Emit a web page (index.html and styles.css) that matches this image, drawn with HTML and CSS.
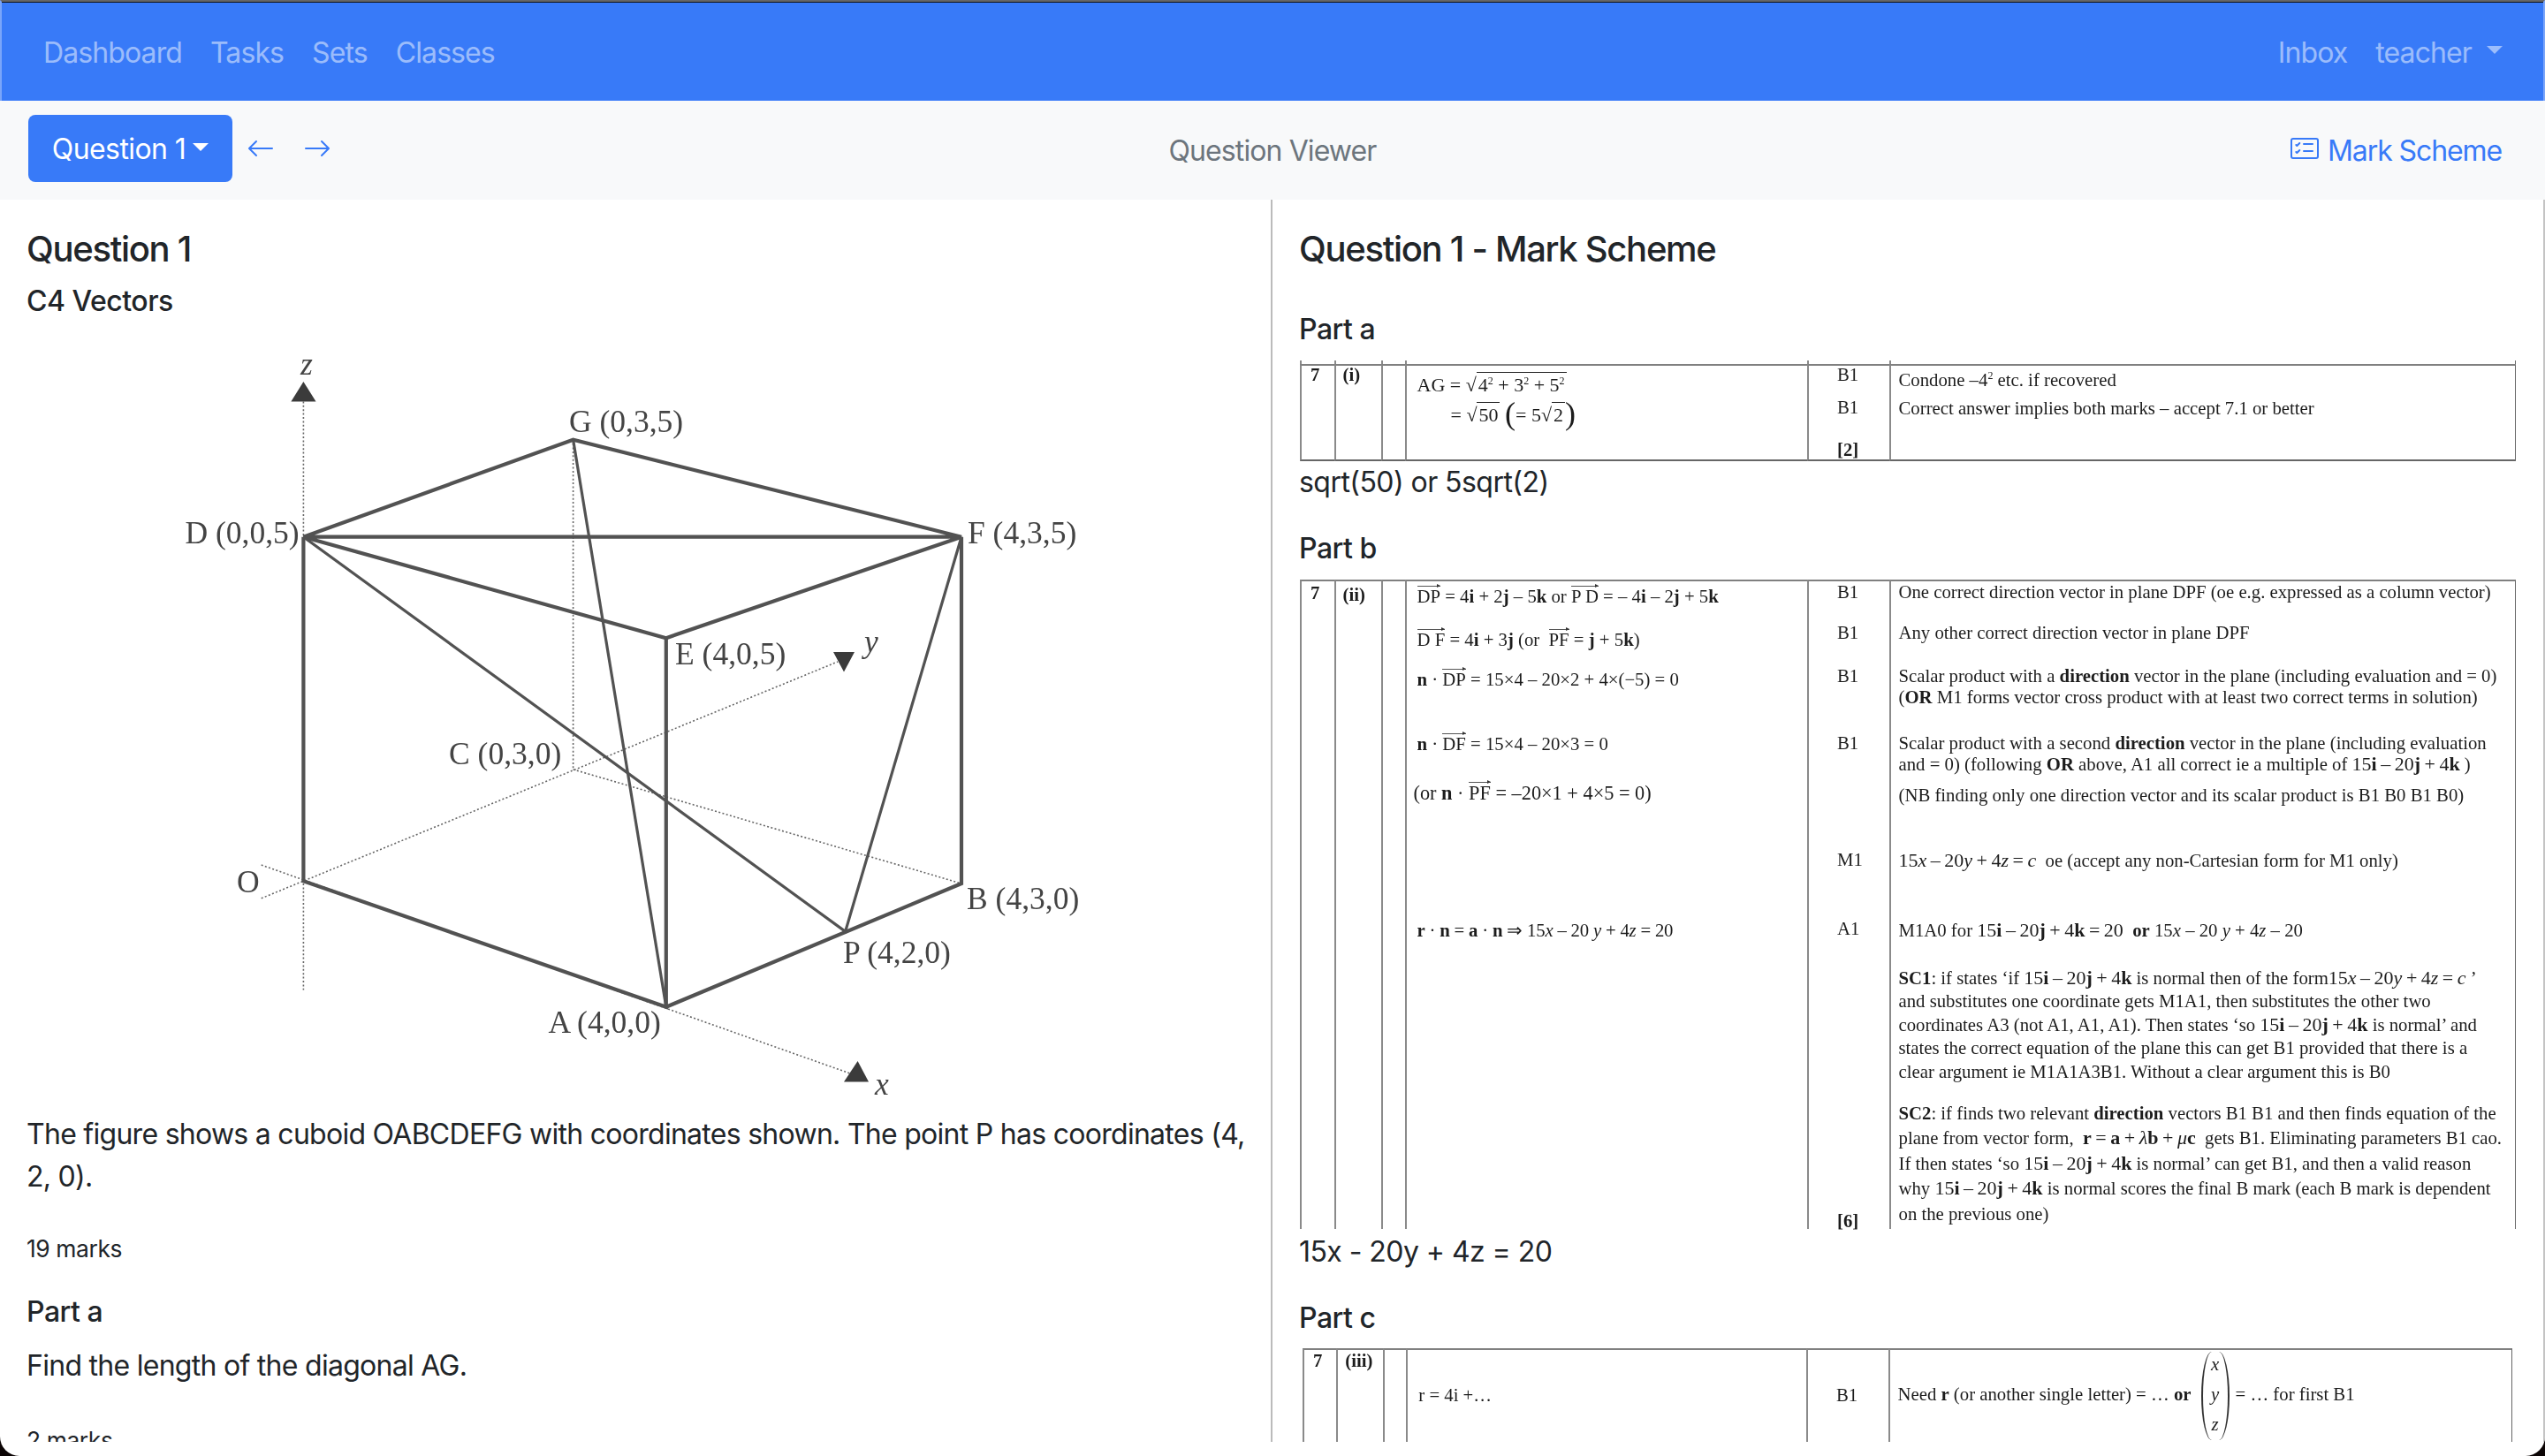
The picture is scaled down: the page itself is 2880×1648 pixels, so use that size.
FILE: index.html
```html
<!DOCTYPE html>
<html lang="en">
<head>
<meta charset="utf-8">
<title>Question Viewer</title>
<link rel="stylesheet" href="styles.css">
</head>
<body>
<div class="window">
  <nav class="navbar">
    <div class="nav-group">
      <a class="nav-link">Dashboard</a>
      <a class="nav-link">Tasks</a>
      <a class="nav-link">Sets</a>
      <a class="nav-link">Classes</a>
    </div>
    <div class="nav-group">
      <a class="nav-link">Inbox</a>
      <a class="nav-link nav-user">teacher<span class="caret caret-nav"></span></a>
    </div>
  </nav>

  <header class="toolbar">
    <div class="tool-left">
      <button class="btn-question">Question 1<span class="caret caret-btn"></span></button>
      <svg class="arrow-icon" viewBox="0 0 16 16" fill="currentColor"><path fill-rule="evenodd" d="M15 8a.5.5 0 0 0-.5-.5H2.707l3.147-3.146a.5.5 0 1 0-.708-.708l-4 4a.5.5 0 0 0 0 .708l4 4a.5.5 0 0 0 .708-.708L2.707 8.5H14.5A.5.5 0 0 0 15 8z"/></svg>
      <svg class="arrow-icon" viewBox="0 0 16 16" fill="currentColor"><path fill-rule="evenodd" d="M1 8a.5.5 0 0 1 .5-.5h11.793l-3.147-3.146a.5.5 0 0 1 .708-.708l4 4a.5.5 0 0 1 0 .708l-4 4a.5.5 0 0 1-.708-.708L13.293 8.5H1.5A.5.5 0 0 1 1 8z"/></svg>
    </div>
    <div class="tool-title">Question Viewer</div>
    <a class="tool-link">
      <svg class="check-icon" viewBox="0 0 16 16" fill="currentColor"><path d="M14.5 3a.5.5 0 0 1 .5.5v9a.5.5 0 0 1-.5.5h-13a.5.5 0 0 1-.5-.5v-9a.5.5 0 0 1 .5-.5h13zm-13-1A1.5 1.5 0 0 0 0 3.5v9A1.5 1.5 0 0 0 1.5 14h13a1.5 1.5 0 0 0 1.5-1.5v-9A1.5 1.5 0 0 0 14.5 2h-13z"/><path d="M7 5.5a.5.5 0 0 1 .5-.5h5a.5.5 0 0 1 0 1h-5a.5.5 0 0 1-.5-.5zm-1.496-.854a.5.5 0 0 1 0 .708l-1.5 1.5a.5.5 0 0 1-.708 0l-.5-.5a.5.5 0 1 1 .708-.708l.146.147 1.146-1.147a.5.5 0 0 1 .708 0zM7 9.5a.5.5 0 0 1 .5-.5h5a.5.5 0 0 1 0 1h-5a.5.5 0 0 1-.5-.5zm-1.496-.854a.5.5 0 0 1 0 .708l-1.5 1.5a.5.5 0 0 1-.708 0l-.5-.5a.5.5 0 0 1 .708-.708l.146.147 1.146-1.147a.5.5 0 0 1 .708 0z"/></svg>
      Mark Scheme
    </a>
  </header>

  <main class="panes">
    <section class="pane pane-left">
      <h5 class="title">Question 1</h5>
      <h6 class="subtitle topic">C4 Vectors</h6>
      <svg class="figure" viewBox="30 380 1300 880">
        <g class="dots">
          <line x1="343.4" y1="450" x2="343.4" y2="1120.6"/>
          <line x1="295.7" y1="1016.8" x2="948" y2="749"/>
          <line x1="295.7" y1="979" x2="962" y2="1215"/>
          <line x1="648.6" y1="497.7" x2="648.6" y2="870.9"/>
          <line x1="648.6" y1="870.9" x2="1088" y2="1000"/>
        </g>
        <g class="edges">
          <polyline points="343.4,607.7 648.6,497.7 1088,607.7 343.4,607.7 753.8,722.2 1088,607.7"/>
          <polyline points="343.4,607.7 343.4,997.2 753.8,1139.7 753.8,722.2"/>
          <polyline points="1088,607.7 1088,1000 753.8,1139.7"/>
        </g>
        <g class="edges edges-thin">
          <polyline points="343.4,607.7 956.6,1054.4 1088,607.7"/>
          <line x1="648.6" y1="497.7" x2="753.8" y2="1139.7"/>
        </g>
        <g class="heads">
          <polygon points="343.4,432 329.4,454.5 357.5,454.5"/>
          <polygon points="943,738 967,738 955,760.4"/>
          <polygon points="970.6,1201 955,1224.5 983,1224.5"/>
        </g>
        <g class="labels">
          <text class="axis" x="340" y="423.7">z</text>
          <text x="644" y="488.5">G (0,3,5)</text>
          <text x="209.5" y="615">D (0,0,5)</text>
          <text x="1095" y="615">F (4,3,5)</text>
          <text x="764" y="751.5">E (4,0,5)</text>
          <text class="axis" x="978" y="738">y</text>
          <text x="508" y="865">C (0,3,0)</text>
          <text x="268" y="1010">O</text>
          <text x="1094" y="1029">B (4,3,0)</text>
          <text x="954" y="1089.5">P (4,2,0)</text>
          <text x="620.5" y="1168.5">A (4,0,0)</text>
          <text class="axis" x="990" y="1239">x</text>
        </g>
      </svg>
      <p class="body-text">The figure shows a cuboid OABCDEFG with coordinates shown. The point P has coordinates (4, 2, 0).</p>
      <p class="marks marks-total">19 marks</p>
      <h6 class="subtitle part-q">Part a</h6>
      <p class="body-text">Find the length of the diagonal AG.</p>
      <p class="marks marks-part">2 marks</p>
    </section>

    <section class="pane pane-right">
      <h5 class="title">Question 1 - Mark Scheme</h5>

      <h6 class="subtitle part part-first">Part a</h6>
      <table class="scan scan-wide scan-one">
        <colgroup><col class="c1"><col class="c2"><col class="c3"><col class="c4"><col class="c5"><col class="c6"></colgroup>
        <tr class="h4"><td></td><td></td><td></td><td></td><td></td><td></td></tr>
        <tr class="h37 top-row">
          <td class="num">7</td><td class="sub">(i)</td><td></td>
          <td class="ans d11 ag">AG = √<span class="root">4<sup>2</sup> + 3<sup>2</sup> + 5<sup>2</sup></span></td>
          <td class="mk">B1</td>
          <td class="note d6">Condone –4<sup>2</sup> etc. if recovered</td>
        </tr>
        <tr class="h49">
          <td></td><td></td><td></td>
          <td class="ans d9 ag ag-two">= √<span class="root">50</span> <span class="tall">(</span>= 5√<span class="root">2</span><span class="tall">)</span></td>
          <td class="mk">B1</td>
          <td class="note d1">Correct answer implies both marks – accept 7.1 or better</td>
        </tr>
        <tr class="h22 end-row">
          <td></td><td></td><td></td><td></td>
          <td class="mk"><b>[2]</b></td>
          <td></td>
        </tr>
      </table>
      <p class="body-text answer">sqrt(50) or 5sqrt(2)</p>

      <h6 class="subtitle part">Part b</h6>
      <table class="scan scan-wide scan-two">
        <colgroup><col class="c1"><col class="c2"><col class="c3"><col class="c4"><col class="c5"><col class="c6"></colgroup>
        <tr class="h48 top-row">
          <td class="num d1">7</td><td class="sub d3">(ii)</td><td></td>
          <td class="ans d5"><span class="vec">DP</span> = 4<b>i</b> + 2<b>j</b> – 5<b>k</b> or <span class="vec">P D</span> = – 4<b>i</b> – 2<b>j</b> + 5<b>k</b></td>
          <td class="mk">B1</td>
          <td class="note">One correct direction vector in plane DPF (oe e.g. expressed as a column vector)</td>
        </tr>
        <tr class="h49">
          <td></td><td></td><td></td>
          <td class="ans d8"><span class="vec">D F</span> = 4<b>i</b> + 3<b>j</b> (or &nbsp;<span class="vec">PF</span> = <b>j</b> + 5<b>k</b>)</td>
          <td class="mk">B1</td>
          <td class="note">Any other correct direction vector in plane DPF</td>
        </tr>
        <tr class="h76">
          <td></td><td></td><td></td>
          <td class="ans d4"><b>n</b> · <span class="vec">DP</span> = 15×4 – 20×2 + 4×(−5) = 0</td>
          <td class="mk">B1</td>
          <td class="note">Scalar product with a <b>direction</b> vector in the plane (including evaluation and = 0)<br>(<b>OR</b> M1 forms vector cross product with at least two correct terms in solution)</td>
        </tr>
        <tr class="h56">
          <td></td><td></td><td></td>
          <td class="ans d1"><b>n</b> · <span class="vec">DF</span> = 15×4 – 20×3 = 0</td>
          <td class="mk">B1</td>
          <td class="note">Scalar product with a second <b>direction</b> vector in the plane (including evaluation<br>and = 0) (following <b>OR</b> above, A1 all correct ie a multiple of <span class="big">15<b>i</b> – 20<b>j</b> + 4<b>k</b></span> )</td>
        </tr>
        <tr class="h76">
          <td></td><td></td><td></td>
          <td class="ans ans-big">(or <b>n</b> · <span class="vec">PF</span> = –20×1 + 4×5 = 0)</td>
          <td></td>
          <td class="note d3">(NB finding only one direction vector and its scalar product is B1 B0 B1 B0)</td>
        </tr>
        <tr class="h78">
          <td></td><td></td><td></td><td></td>
          <td class="mk">M1</td>
          <td class="note d1"><span class="big">15<i>x</i> – 20<i>y</i> + 4<i>z</i> = <i>c</i></span> &nbsp;oe (accept any non-Cartesian form for M1 only)</td>
        </tr>
        <tr class="h55">
          <td></td><td></td><td></td>
          <td class="ans d2 tight"><b>r</b> · <b>n</b> = <b>a</b> · <b>n</b> ⇒ 15<i>x</i> – 20 <i>y</i> + 4<i>z</i> = 20</td>
          <td class="mk">A1</td>
          <td class="note d2">M1A0 for <span class="big">15<b>i</b> – 20<b>j</b> + 4<b>k</b> = 20</span> &nbsp;<b>or</b> 15<i>x</i> – 20 <i>y</i> + 4<i>z</i> – 20</td>
        </tr>
        <tr class="h152">
          <td></td><td></td><td></td><td></td><td></td>
          <td class="note lh-sc1"><b>SC1</b>: if states ‘if <span class="big">15<b>i</b> – 20<b>j</b> + 4<b>k</b></span> is normal then of the form<span class="big">15<i>x</i> – 20<i>y</i> + 4<i>z</i> = <i>c</i></span> ’<br>and substitutes one coordinate gets M1A1, then substitutes the other two<br>coordinates A3 (not A1, A1, A1). Then states ‘so <span class="big">15<b>i</b> – 20<b>j</b> + 4<b>k</b></span> is normal’ and<br>states the correct equation of the plane this can get B1 provided that there is a<br>clear argument ie M1A1A3B1. Without a clear argument this is B0</td>
        </tr>
        <tr class="h145">
          <td></td><td></td><td></td><td></td>
          <td class="mk mk-end"><b>[6]</b></td>
          <td class="note lh-sc2"><b>SC2</b>: if finds two relevant <b>direction</b> vectors B1 B1 and then finds equation of the<br>plane from vector form, &nbsp;<span class="big"><b>r</b> = <b>a</b> + <i>λ</i><b>b</b> + <i>μ</i><b>c</b></span> &nbsp;gets B1. Eliminating parameters B1 cao.<br>If then states ‘so <span class="big">15<b>i</b> – 20<b>j</b> + 4<b>k</b></span> is normal’ can get B1, and then a valid reason<br>why <span class="big">15<b>i</b> – 20<b>j</b> + 4<b>k</b></span> is normal scores the final B mark (each B mark is dependent<br>on the previous one)</td>
        </tr>
      </table>
      <p class="body-text answer">15x - 20y + 4z = 20</p>

      <h6 class="subtitle part">Part c</h6>
      <table class="scan scan-narrow">
        <colgroup><col class="c1"><col class="c2"><col class="c3"><col class="c4"><col class="c5"><col class="c6"></colgroup>
        <tr class="h120 top-row">
          <td class="num">7</td><td class="sub">(iii)</td><td></td>
          <td class="ans d40">r = 4i +…</td>
          <td class="mk d40">B1</td>
          <td class="note matrix-cell">Need <b>r</b> (or another single letter) = … <b>or</b><span class="matrix"><i>x</i><i>y</i><i>z</i></span>= … for first B1</td>
        </tr>
      </table>
    </section>
  </main>
  <div class="window-foot"></div>
</div>
</body>
</html>
```

FILE: styles.css
```css
* { box-sizing: border-box; }
html, body { margin: 0; padding: 0; }
body {
  width: 2880px;
  height: 1648px;
  background: #0c0505;
  overflow: hidden;
  font-family: Inter, "Noto Sans", sans-serif;
  font-size: 32px;
  line-height: 48px;
  color: #212529;
}
.window {
  width: 2880px;
  height: 1648px;
  display: flex;
  flex-direction: column;
  background: #fff;
  border-radius: 0 0 22px 22px;
  overflow: hidden;
}

/* top bar */
.navbar {
  height: 114px;
  flex: none;
  display: flex;
  justify-content: space-between;
  align-items: center;
  padding: 3px 46px 0 31px;
  background: #387af8;
  border-top: 2px solid #666;
  border-left: 2px solid #7aa5fa;
  border-right: 2px solid #7aa5fa;
  box-shadow: inset 0 1px 0 #111;
}
.nav-group { display: flex; gap: 0; }
.nav-link {
  padding: 0 16px;
  color: rgba(255, 255, 255, .5);
  letter-spacing: -0.9px;
}
.nav-user { display: flex; align-items: center; padding-right: 0; }
.caret {
  display: inline-block;
  width: 0;
  height: 0;
  border-left: 9px solid transparent;
  border-right: 9px solid transparent;
  border-top: 9px solid currentColor;
}
.caret-nav { margin: -6px 0 0 17px; color: rgba(255, 255, 255, .5); }
.caret-btn { margin: 0 0 6px 8px; color: #fff; }

/* toolbar */
.toolbar {
  height: 112px;
  flex: none;
  display: grid;
  grid-template-columns: 1fr auto 1fr;
  align-items: center;
  padding: 0 32px;
  background: #f8f9fa;
}
.tool-left {
  display: flex;
  align-items: center;
  gap: 32px;
  align-self: start;
  margin-top: 16px;
}
.btn-question {
  width: 231px;
  height: 76px;
  margin-right: -16px;
  padding: 2px 0 0;
  border: 0;
  border-radius: 8px;
  background: #387af8;
  color: #fff;
  font: inherit;
  letter-spacing: -0.6px;
  display: flex;
  align-items: center;
  justify-content: center;
}
.arrow-icon { width: 32px; height: 32px; color: #387af8; }
.tool-title { margin-top: 2px; color: #6c757d; letter-spacing: -0.9px; }
.tool-link {
  justify-self: end;
  display: flex;
  align-items: center;
  gap: 10px;
  margin: 2px 17px 0 0;
  color: #387af8;
  letter-spacing: -1.1px;
}
.check-icon { width: 32px; height: 32px; margin-top: -6px; }

/* panes */
.panes {
  flex: 1;
  min-height: 0;
  display: grid;
  grid-template-columns: 1440px 1440px;
}
.pane { overflow: hidden; padding: 32px 30px 0; }
.pane-left { padding-right: 22px; border-right: 2px solid #bbb; }
.pane-right { border-right: 2px solid #c4c4c4; }
.window-foot { height: 16px; flex: none; }

.title {
  margin: 0;
  font-size: 40px;
  line-height: 48px;
  font-weight: 500;
  letter-spacing: -1.3px;
}
.subtitle {
  margin: 0;
  font-size: 32px;
  line-height: 38.4px;
  font-weight: 500;
  letter-spacing: -0.5px;
}
.topic { margin-top: 16px; }
.figure {
  display: block;
  width: 1300px;
  height: 880px;
  margin-top: 20px;
  filter: blur(.5px);
}
.dots line { stroke: #666; stroke-width: 1.6; stroke-dasharray: 2 2.4; fill: none; }
.edges polyline, .edges line { stroke: #525252; stroke-width: 4.2; fill: none; stroke-linejoin: miter; }
.edges-thin polyline, .edges-thin line { stroke-width: 3.2; }
.heads polygon { fill: #3b3b3b; }
.labels text { font-family: "Liberation Serif", serif; font-size: 35.5px; fill: #444; }
.labels .axis { font-style: italic; }

.body-text { margin: 0; letter-spacing: -0.72px; }
.answer { letter-spacing: -0.55px; }
.marks { margin: 0; font-size: 26.4px; line-height: 42px; letter-spacing: -0.4px; }
.marks-total { margin-top: 36px; }
.part-q { margin-top: 32px; margin-bottom: 17px; }
.marks-part { margin-top: 39px; }

.part { margin-top: 32px; margin-bottom: 15px; }
.part-first { margin-top: 48px; margin-bottom: 16px; }

/* scanned mark-scheme tables */
.scan {
  table-layout: fixed;
  border-collapse: separate;
  border-spacing: 0;
  font-family: "Liberation Serif", serif;
  font-size: 20.75px;
  line-height: 24px;
  color: #1c1c1c;
  white-space: nowrap;
  filter: blur(.35px);
}
.scan-two { margin-bottom: 2px; }
.scan-wide { width: 1376px; margin-left: 1px; }
.scan-wide .c1 { width: 38.5px; }
.scan-wide .c2 { width: 53.5px; }
.scan-wide .c3 { width: 26.5px; }
.scan-wide .c4 { width: 455.5px; }
.scan-wide .c5 { width: 93px; }
.scan-wide .c6 { width: 709px; }
.scan-narrow { width: 1369px; margin-left: 4px; }
.scan-narrow .c1 { width: 38.3px; }
.scan-narrow .c2 { width: 53px; }
.scan-narrow .c3 { width: 26px; }
.scan-narrow .c4 { width: 452.7px; }
.scan-narrow .c5 { width: 93px; }
.scan-narrow .c6 { width: 706px; }
.scan td {
  padding: 0;
  border-left: 2px solid #8a8a8a;
  vertical-align: top;
  overflow: visible;
}
.scan td:last-child { border-right: 1.5px solid #666; }
.top-row td { border-top: 2px solid #808080; }
.end-row td { border-bottom: 2px solid #666; }
.h4 { height: 4px; }
.h22 { height: 22px; line-height: 22px; }
.h37 { height: 37px; line-height: 21px; }
.h48 { height: 48px; }
.h49 { height: 49px; }
.h55 { height: 55px; }
.h56 { height: 56px; }
.h76 { height: 76px; }
.h78 { height: 78px; }
.h120 { height: 120px; }
.h145 { height: 145px; }
.h152 { height: 152px; }
.h4 td { line-height: 0; font-size: 0; }

.scan td.num { padding-left: 10px; font-weight: 700; }
.scan td.sub { padding-left: 8px; font-weight: 700; }
.scan td.ans { padding-left: 12px; }
.scan td.mk { padding-left: 32px; }
.scan td.note { padding-left: 8.5px; }
.scan td.d1 { padding-top: 1px; }
.scan td.d2 { padding-top: 2px; }
.scan td.d3 { padding-top: 3px; }
.scan td.d4 { padding-top: 4px; }
.scan td.d5 { padding-top: 5px; }
.scan td.d6 { padding-top: 6px; }
.scan td.d8 { padding-top: 8px; }
.scan td.d9 { padding-top: 9px; }
.scan td.d11 { padding-top: 11px; }
.scan td.d40 { padding-top: 39px; }
.scan td.ans-big { padding-left: 8px; font-size: 22.3px; }
.scan td.ag { font-size: 22px; }
.scan td.ag-two { padding-left: 50px; }
.scan td.tight { letter-spacing: -.2px; }
.scan td.mk-end { vertical-align: bottom; line-height: 18px; }
.scan td.lh-sc1 { line-height: 26.5px; }
.scan td.lh-sc2 { line-height: 28.5px; }
.scan sup { font-size: 12px; line-height: 0; }
.big { font-size: 22px; line-height: 0; word-spacing: -1px; }
.root { border-top: 1.5px solid #222; padding: 1px 2px 0; }
.tall { font-size: 36px; line-height: 0; font-weight: 300; vertical-align: -3px; }
.vec {
  display: inline-block;
  position: relative;
  line-height: 21px;
  padding-top: 1px;
  border-top: 1.5px solid #555;
}
.vec::after {
  content: "";
  position: absolute;
  right: 0;
  top: -3px;
  border-left: 4px solid #333;
  border-top: 2px solid transparent;
  border-bottom: 2px solid transparent;
}
.scan td.matrix-cell { padding-top: 2px; }
.matrix {
  display: inline-flex;
  flex-direction: column;
  align-items: center;
  vertical-align: middle;
  width: 32px;
  height: 100px;
  margin: 0 7px 0 11px;
  line-height: 34px;
  border-left: 2px solid #333;
  border-right: 2px solid #333;
  border-radius: 12px / 50px;
}
.matrix i { position: relative; top: -3px; }
```
